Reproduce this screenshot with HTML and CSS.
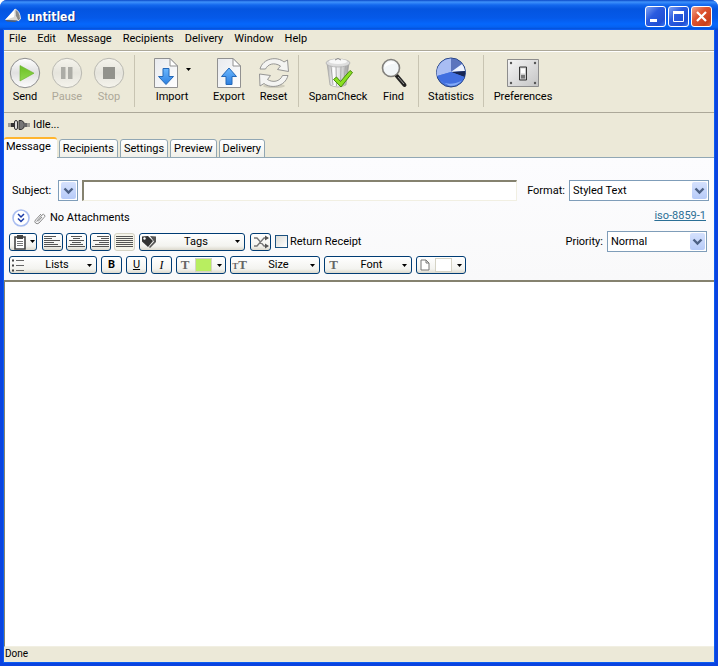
FILE: index.html
```html
<!DOCTYPE html>
<html lang="en">
<head>
<meta charset="utf-8">
<title>untitled</title>
<link rel="stylesheet" href="styles.css">
</head>
<body>
<svg class="defs" aria-hidden="true">
  <defs>
    <linearGradient id="disc" x1="0" y1="0" x2="0" y2="1"><stop offset="0" stop-color="#fff"/><stop offset=".5" stop-color="#e0e0e0"/><stop offset="1" stop-color="#fdfdfd"/></linearGradient>
    <linearGradient id="paper" x1="0" y1="0" x2="1" y2="1"><stop offset="0" stop-color="#e8eaee"/><stop offset="1" stop-color="#fff"/></linearGradient>
    <linearGradient id="blue" x1="0" y1="0" x2="0" y2="1"><stop offset="0" stop-color="#6bb8ff"/><stop offset="1" stop-color="#2c7fe0"/></linearGradient>
    <linearGradient id="green" x1="0" y1="0" x2="0" y2="1"><stop offset="0" stop-color="#6cc024"/><stop offset="1" stop-color="#90d850"/></linearGradient>
    <linearGradient id="metal" x1="0" y1="0" x2="1" y2="0"><stop offset="0" stop-color="#aaa"/><stop offset=".3" stop-color="#fff"/><stop offset=".7" stop-color="#d4d4d4"/><stop offset="1" stop-color="#999"/></linearGradient>
    <linearGradient id="plate" x1="0" y1="0" x2="1" y2="1"><stop offset="0" stop-color="#f6f6f6"/><stop offset="1" stop-color="#c4c4c4"/></linearGradient>
    <symbol id="down" viewBox="0 0 5 3"><path d="M0 0h5L2.500 3z" fill="#000"/></symbol>
    <symbol id="chevron" viewBox="0 0 15 17"><path d="M3.500 6.500L7.500 10.500L11.500 6.500" fill="none" stroke="#4d6185" stroke-width="2.400"/></symbol>
  </defs>
</svg>
<div class="window">
  <header class="titlebar">
    <svg class="app-icon" viewBox="0 0 18 16"><path d="M0 12L10 1L14 13Z" fill="#d8d8d4"/><path d="M0 12L10 1L9 9Z" fill="#fff"/><path d="M10 1Q15 3 15.500 11L13 13Q9 8 10 1Z" fill="#8a8a88" stroke="#eee" stroke-width=".9"/><path d="M0 12L13 12.500L10 14L2 13.500Z" fill="#555d6d"/></svg>
    <h1>untitled</h1>
    <button class="caption" aria-label="Minimize"><svg viewBox="0 0 19 19"><path d="M4 12h7v3H4z" fill="#fff"/></svg></button>
    <button class="caption" aria-label="Maximize"><svg viewBox="0 0 19 19"><path d="M4.500 5v9.500h10V5" fill="none" stroke="#fff"/><path d="M4 4h11v3H4z" fill="#fff"/></svg></button>
    <button class="caption close" aria-label="Close"><svg viewBox="0 0 19 19"><path d="M5 5l9 9M14 5l-9 9" stroke="#fff" stroke-width="2.200"/></svg></button>
  </header>
  <div class="frame">
    <nav class="menubar">
      <button>File</button><button>Edit</button><button>Message</button><button>Recipients</button><button>Delivery</button><button>Window</button><button>Help</button>
    </nav>
    <div class="toolbar">
      <button class="tool">
        <svg class="icon" viewBox="0 0 32 32"><circle cx="16" cy="16" r="14.700" fill="url(#disc)" stroke="#8c8c8c"/><path d="M11 8.500V24L25 16.200Z" fill="url(#green)" stroke="#68b02c" stroke-width=".6"/></svg>
        <span>Send</span></button>
      <button class="tool" disabled>
        <svg class="icon" viewBox="0 0 32 32"><circle cx="16" cy="16" r="14.700" fill="url(#disc)" fill-opacity=".55" stroke="#b9b8b0"/><path d="M10 10h4.500v12H10zM17 10h4.500v12H17z" fill="#acaca6"/></svg>
        <span>Pause</span></button>
      <button class="tool" disabled>
        <svg class="icon" viewBox="0 0 32 32"><circle cx="16" cy="16" r="14.700" fill="url(#disc)" fill-opacity=".55" stroke="#b9b8b0"/><path d="M10 10h12v12H10z" fill="#92928c"/></svg>
        <span>Stop</span></button>
      <hr>
      <button class="tool import">
        <span class="pair"><svg class="icon page" viewBox="0 0 24 32"><path d="M.5 1.500H16L23.500 9V30.500H.5Z" fill="url(#paper)" stroke="#919191"/><path d="M16 1.500V9H23.500Z" fill="#fff" stroke="#919191"/><path d="M9 11.500h6v8h4.500L12 27.500L4.500 19.500H9z" fill="url(#blue)" stroke="#2468b8"/></svg><svg class="arrow" viewBox="0 0 5 3"><use href="#down"/></svg></span>
        <span>Import</span></button>
      <button class="tool export">
        <svg class="icon page" viewBox="0 0 24 32"><path d="M.5 1.500H16L23.500 9V30.500H.5Z" fill="url(#paper)" stroke="#919191"/><path d="M16 1.500V9H23.500Z" fill="#fff" stroke="#919191"/><path d="M9 27.500h6v-8h4.500L12 11L4.500 19.500H9z" fill="url(#blue)" stroke="#2468b8"/></svg>
        <span>Export</span></button>
      <button class="tool reset">
        <svg class="icon" viewBox="0 0 32 32"><ellipse cx="16" cy="29" rx="11" ry="2" fill="#cfccbc"/><g fill="#f4f4f2" stroke="#8b8b8b" stroke-width=".9"><path d="M2 12C5 1 19-1 26 5L29.500 3L30.500 14.500L19.500 12.500L22.500 9C16 5 10 7 7.500 12Z"/><path d="M30 18.500C27 30 13 32 6 26.500L2 29L1.500 17L12.500 18.500L9.500 22.500C15 26 22 24.500 24.500 18.500Z"/></g></svg>
        <span>Reset</span></button>
      <hr>
      <button class="tool spam">
        <svg class="icon" viewBox="0 0 32 32"><path d="M5 6L8 28Q16 32 24 28L27 6Z" fill="url(#metal)" stroke="#9a9a9a" stroke-width=".6"/><path d="M9 9l2 19M14 9l.5 20M19 9l-.5 20M23.500 9l-2 19" stroke="#aaa" fill="none"/><ellipse cx="16" cy="6" rx="12" ry="4" fill="#ddd" stroke="#aaa" stroke-width=".7"/><ellipse cx="16" cy="4.500" rx="9" ry="2.600" fill="#f8f8f8"/><path d="M13 3q3-3 6 0" fill="none" stroke="#888"/><path d="M11.500 22.500l3-2.500 4 4.500L28 13.500l2.500 2L19 30Z" fill="#8ae021" stroke="#478b0c"/></svg>
        <span>SpamCheck</span></button>
      <button class="tool find">
        <svg class="icon" viewBox="0 0 32 32"><path d="M18.500 18.500l8 9.500" stroke="#222" stroke-width="4" stroke-linecap="round"/><path d="M20 20l6 7" stroke="#999" stroke-width="1"/><circle cx="13" cy="11" r="8.500" fill="#f2f6f8" stroke="#82807c" stroke-width="1.600"/><path d="M6.500 11a6.500 6.500 0 0 1 11-4.500Q9 7 6.500 11Z" fill="#fff"/></svg>
        <span>Find</span></button>
      <hr>
      <button class="tool stats">
        <svg class="icon" viewBox="0 0 32 32"><circle cx="16" cy="15.500" r="14.500" fill="#4b78dc" stroke="#26417f"/><path d="M16 15V1.500A14.500 14.500 0 0 0 2 19Z" fill="#a9bdf3"/><path d="M16 15V1.500A14.500 14.500 0 0 1 27 7Z" fill="#5c74bd"/><path d="M16 15L27 7A14.500 14.500 0 0 1 30 14Z" fill="#eef3ff"/><path d="M16 15L30 14A14.500 14.500 0 0 1 29.500 20Z" fill="#172654"/><path d="M16 15L2 19Q8 30 19 28Q27 27 29.500 20Z" fill="#416fe0"/><path d="M5 23.500Q14 30 27 23.500Q21 30 14 28.500Z" fill="#83aaf7"/></svg>
        <span>Statistics</span></button>
      <hr>
      <button class="tool prefs">
        <svg class="icon" viewBox="0 0 32 32"><path d="M.5 2.500h31v27H.5z" fill="url(#plate)" stroke="#8d8d8d"/><g fill="#555"><circle cx="4" cy="6" r="1.200"/><circle cx="28" cy="6" r="1.200"/><circle cx="4" cy="26" r="1.200"/><circle cx="28" cy="26" r="1.200"/></g><path d="M12.500 10h7v13h-7z" fill="#ccc" stroke="#333"/><path d="M14 11.500h4v5h-4z" fill="#fff"/><path d="M14 18h4v3.500h-4z" fill="#777"/></svg>
        <span>Preferences</span></button>
    </div>
    <div class="activity">
      <svg viewBox="0 0 22 12"><path d="M0 5h5M0 7h4M18 5h4M18 7h4" stroke="#555" fill="none"/><path d="M3 4h3v4H3z" fill="#333"/><rect x="6.500" y="1.500" width="3" height="9" rx="1.500" fill="#ddd" stroke="#333"/><path d="M11 1.500h2.500q3 1 3 4.500t-3 4.500H11z" fill="#777" stroke="#333"/><path d="M16 4h3v4h-3z" fill="#666"/></svg>
      <span>Idle...</span>
    </div>
    <div class="tabs" role="tablist">
      <button role="tab" aria-selected="true">Message</button><button role="tab">Recipients</button><button role="tab">Settings</button><button role="tab">Preview</button><button role="tab">Delivery</button>
    </div>
    <main class="panel">
      <div class="row subject-row">
        <label for="subject">Subject:</label>
        <button class="history" aria-label="Recent subjects"><svg class="chev" viewBox="0 0 15 17"><use href="#chevron"/></svg></button>
        <input id="subject" type="text">
        <label class="format-label" for="format">Format:</label>
        <span class="select format"><select id="format"><option>Styled Text</option></select><svg class="chev" viewBox="0 0 15 17"><use href="#chevron"/></svg></span>
      </div>
      <div class="row attach-row">
        <button class="expand" aria-label="Show attachments"><svg viewBox="0 0 18 18"><circle cx="9" cy="9" r="8" fill="#fff" stroke="#a9bdf0" stroke-width="1.600"/><path d="M6 5l3 3 3-3M6 9.500l3 3 3-3" fill="none" stroke="#1c3ca8" stroke-width="1.500"/></svg></button>
        <svg class="clip" viewBox="0 0 12 13"><path d="M2.500 9.500L8 3Q9.500 1.500 10.500 3T10 5.500L5 11Q3 12.500 1.500 11T1.500 8L7 2M4 9.500L8 5" fill="none" stroke="#888" stroke-width="1"/></svg>
        <span>No Attachments</span>
        <a href="#charset">iso-8859-1</a>
      </div>
      <div class="row format-row">
        <button class="mini combo" aria-label="Paste"><svg class="g16" viewBox="0 0 16 16"><path d="M3 3h10v12H3z" fill="#fff" stroke="#444" stroke-width="1.600"/><path d="M5 1h6v4H5z" fill="#444"/><path d="M5 7.500h6M5 9.500h6M5 11.500h6" stroke="#777"/></svg><svg class="arrow" viewBox="0 0 5 3"><use href="#down"/></svg></button>
        <span class="group">
          <button class="mini" aria-label="Align left"><svg class="lines" viewBox="0 0 17 14"><path d="M0 1.500h12M0 3.500h8M0 5.500h16M0 7.500h10M0 9.500h14M0 11.500h17"/></svg></button>
          <button class="mini" aria-label="Center"><svg class="lines" viewBox="0 0 17 14"><path d="M3 1.500h11M5 3.500h7M1 5.500h15M4 7.500h9M2 9.500h13M0 11.500h17"/></svg></button>
          <button class="mini" aria-label="Align right"><svg class="lines" viewBox="0 0 17 14"><path d="M5 1.500h12M9 3.500h8M1 5.500h16M7 7.500h10M3 9.500h14M0 11.500h17"/></svg></button>
          <button class="mini flat" aria-label="Justify"><svg class="lines" viewBox="0 0 17 14"><path d="M0 1.500h17M0 3.500h17M0 5.500h17M0 7.500h17M0 9.500h17M0 11.500h17"/></svg></button>
        </span>
        <button class="mini wide tags"><svg class="g16" viewBox="0 0 16 16"><path d="M1 2.500L7 2L12 7L7 13L1 7.500Z" fill="#333"/><path d="M9 2L15 2.500V8L9 14L8 13L13 7.500Z" fill="#555"/><circle cx="3.500" cy="4.500" r="1.200" fill="#fff"/></svg><span>Tags</span><svg class="arrow" viewBox="0 0 5 3"><use href="#down"/></svg></button>
        <button class="mini" aria-label="Shuffle"><svg class="g16" viewBox="0 0 16 16"><path d="M1 4h3l7 8h3M1 12h3l7-8h3" fill="none" stroke="#777" stroke-width="1.300"/><path d="M12 1.500L16 4l-4 2.500zM12 9.500l4 2.500-4 2.500z" fill="#555"/></svg></button>
        <label class="check"><input type="checkbox">Return Receipt</label>
        <label class="priority-label" for="priority">Priority:</label>
        <span class="select priority"><select id="priority"><option>Normal</option></select><svg class="chev" viewBox="0 0 15 17"><use href="#chevron"/></svg></span>
      </div>
      <div class="row style-row">
        <button class="mini wide"><svg class="g16" viewBox="0 0 16 16"><path d="M1 3.500h2M1 8.500h2M1 13.500h2" stroke="#444" stroke-width="2"/><path d="M5 3.500h8M5 8.500h8M5 13.500h8" stroke="#666"/></svg><span>Lists</span><svg class="arrow" viewBox="0 0 5 3"><use href="#down"/></svg></button>
        <button class="mini"><b>B</b></button>
        <button class="mini"><u>U</u></button>
        <button class="mini"><i>I</i></button>
        <button class="mini combo swatch-button" aria-label="Text colour"><span class="serif">T</span><span class="swatch lime"></span><svg class="arrow" viewBox="0 0 5 3"><use href="#down"/></svg></button>
        <button class="mini wide size"><span class="serif"><small>T</small>T</span><span>Size</span><svg class="arrow" viewBox="0 0 5 3"><use href="#down"/></svg></button>
        <button class="mini wide"><span class="serif">T</span><span>Font</span><svg class="arrow" viewBox="0 0 5 3"><use href="#down"/></svg></button>
        <button class="mini combo swatch-button" aria-label="Page colour"><svg class="sheet" viewBox="0 0 10 12"><path d="M1 1h5l3 3v7H1zM6 1v3h3" fill="#fff" stroke="#777"/></svg><span class="swatch"></span><svg class="arrow" viewBox="0 0 5 3"><use href="#down"/></svg></button>
      </div>
    </main>
    <textarea class="editor" aria-label="Message body"></textarea>
    <footer class="status">Done</footer>
  </div>
</div>
</body>
</html>
```
FILE: styles.css
```css
* { box-sizing: border-box; }

body {
  margin: 0;
  background: #fff;
  color: #000;
  font: 11px/14px Roboto, "Liberation Sans", sans-serif;
}

button, input, select, textarea {
  margin: 0;
  padding: 0;
  border: 0;
  background: none;
  color: inherit;
  font: inherit;
}

svg { display: block; flex: none; }
.defs { position: absolute; width: 0; height: 0; }

.window {
  display: flex;
  flex-direction: column;
  min-height: 100vh;
  overflow: hidden;
  border-radius: 7px 7px 0 0;
  background: #0a43e0;
}

.titlebar {
  display: flex;
  align-items: center;
  gap: 2px;
  height: 30px;
  padding: 2px 6px 0 5px;
  background: linear-gradient(#0a48c8 0, #3e91fb 2px, #1368ee 5px, #0455e0 9px, #0559e9 18px, #0567fc 24px, #0562f2 27px, #0347cc 30px);
}

.app-icon { width: 18px; height: 16px; }

.titlebar h1 {
  flex: 1;
  margin: 2px 0 0 2px;
  color: #fff;
  font: bold 12px/16px "DejaVu Sans Condensed", "Liberation Sans", sans-serif;
  text-shadow: 1px 1px #0b2f8a;
}

.caption {
  width: 21px;
  height: 21px;
  border: 1px solid #fff;
  border-radius: 3px;
  background: linear-gradient(135deg, #7fa2f2, #2a5be0 40%, #1f4fd4 80%, #3d7cf5);
}
.caption svg { width: 19px; height: 19px; }
.caption.close { background: linear-gradient(135deg, #f0a48c, #de5330 40%, #c9401c 80%, #e0683f); }

.frame {
  display: flex;
  flex: 1;
  flex-direction: column;
  margin: 0 4px 4px;
  background: #ece9d8;
  outline: 1px solid #0b5cf0;
}

.menubar {
  display: flex;
  height: 21px;
  padding-bottom: 2px;
  border-bottom: 1px solid #aca899;
}
.menubar button { padding: 0 6px 0 5px; }

.toolbar {
  display: flex;
  align-items: stretch;
  height: 62px;
  padding: 3px 0 5px;
  border-top: 1px solid #fff;
  border-bottom: 1px solid #aca899;
}
.toolbar hr {
  width: 1px;
  margin: 0 4px;
  border: 0;
  background: #c8c4b2;
}

.tool {
  display: flex;
  flex-direction: column;
  align-items: center;
  justify-content: flex-start;
  width: 42px;
  padding-top: 2px;
  white-space: nowrap;
}
.tool > span:last-child { margin-top: 1px; }
.tool:disabled { color: #aca899; }
.tool.import { width: 66px; }
.tool.export { width: 48px; }
.tool.reset, .tool.find { width: 41px; }
.tool.spam, .tool.prefs { width: 70px; }
.tool.stats { width: 56px; }

.icon { width: 32px; height: 32px; }
.icon.page { width: 24px; }
.pair { display: flex; align-items: flex-start; gap: 8px; }
.pair .arrow { margin-top: 11px; }
.arrow { width: 5px; height: 3px; }

.activity {
  display: flex;
  align-items: center;
  gap: 3px;
  height: 24px;
  padding-left: 4px;
}
.activity svg { width: 22px; height: 12px; }

.tabs {
  display: flex;
  align-items: flex-end;
  gap: 2px;
  height: 21px;
  box-shadow: inset 0 -1px #91a7b4;
}
.tabs button {
  height: 19px;
  padding: 0 3px;
  border: 1px solid #91a7b4;
  border-radius: 3px 3px 0 0;
  background: linear-gradient(#fff, #f0f0ea);
}
.tabs button[aria-selected="true"] {
  height: 21px;
  padding: 0 6px 3px 2px;
  border: 0;
  border-top: 2px solid #ffb52e;
  background: #fcfcfe;
}

.panel {
  display: flex;
  flex-direction: column;
  padding: 22px 6px 5px 5px;
  background: linear-gradient(#fcfcfe, #f9f9fa);
}

.row { display: flex; align-items: center; gap: 4px; }

.subject-row { height: 21px; padding-left: 3px; }
.subject-row label:first-child { width: 42px; }

.history {
  display: grid;
  place-items: center;
  width: 20px;
  height: 21px;
  border: 1px solid #7f9db9;
  background: #fff;
}

.chev {
  width: 15px;
  height: 17px;
  border-radius: 2px;
  background: linear-gradient(#d5e1fd, #b7cbf8);
}

#subject {
  flex: 1;
  min-width: 40px;
  height: 21px;
  padding: 0 4px;
  border: 1px solid #f1efe2;
  border-top: 2px solid #85826f;
  border-left: 2px solid #85826f;
  background: #fff;
}

.format-label { margin-left: 6px; }

.select { position: relative; height: 21px; }
.select.format { width: 140px; margin-right: -1px; }
.select.priority { width: 100px; margin-right: 1px; }
.select select {
  appearance: none;
  width: 100%;
  height: 21px;
  padding: 0 20px 0 3px;
  border: 1px solid #7f9db9;
  border-radius: 0;
  background: #fff;
}
.select .chev { position: absolute; top: 2px; right: 2px; pointer-events: none; }

.attach-row { height: 30px; padding: 4px 2px 0 3px; }
.expand svg { width: 18px; height: 18px; }
.clip { width: 12px; height: 13px; }
.attach-row a { margin: 0 0 4px auto; color: #2b6f95; }

.format-row { height: 21px; }
.group { display: flex; gap: 3px; }
.format-row .group { margin-left: 1px; }

.check { display: flex; align-items: center; gap: 2px; }
.check input {
  appearance: none;
  width: 13px;
  height: 13px;
  border: 1px solid #1c5180;
  background: linear-gradient(135deg, #dcdcd7, #fff);
}
.priority-label { margin-left: auto; }

.style-row { height: 20px; margin-top: 3px; }

.mini {
  display: flex;
  align-items: center;
  justify-content: center;
  width: 21px;
  height: 18px;
  border: 1px solid #003c74;
  border-radius: 3px;
  background: linear-gradient(#fff, #f3f3ef 75%, #dcd9cd);
}
.mini.flat { border-color: #d5d3c5; background: #f5f4ea; }
.mini.combo { width: 28px; gap: 2px; }
.mini.swatch-button { width: 50px; gap: 5px; }
.mini.wide { width: 88px; padding: 0 4px 0 1px; }
.mini.wide.size { width: 90px; }
.mini.wide.tags { width: 106px; margin-right: 1px; }
.mini.wide > span:nth-child(2) { flex: 1; text-align: center; }
.g16 { width: 16px; height: 16px; }
.lines { width: 17px; height: 14px; fill: none; stroke: #555; }
.mini i { font-family: "Liberation Serif", serif; font-size: 12px; }
.serif { width: 15px; color: #666; font: bold 13px/14px "Liberation Serif", serif; text-align: center; }
.swatch-button .serif { width: 9px; }
.serif small { font-size: 9px; }
.sheet { width: 10px; height: 12px; }
.swatch { width: 17px; height: 14px; border: 1px solid #d5d3c5; background: #fff; }
.swatch.lime { background: #b8ee60; }

.editor {
  flex: 1;
  width: 100%;
  min-height: 120px;
  padding: 4px;
  border-top: 2px solid #85826f;
  border-left: 1px solid #85826f;
  border-bottom: 1px solid #f1efe2;
  background: #fff;
  resize: none;
  outline: 0;
}

.status { height: 15px; padding-left: 1px; font-size: 10px; line-height: 14px; }
```
